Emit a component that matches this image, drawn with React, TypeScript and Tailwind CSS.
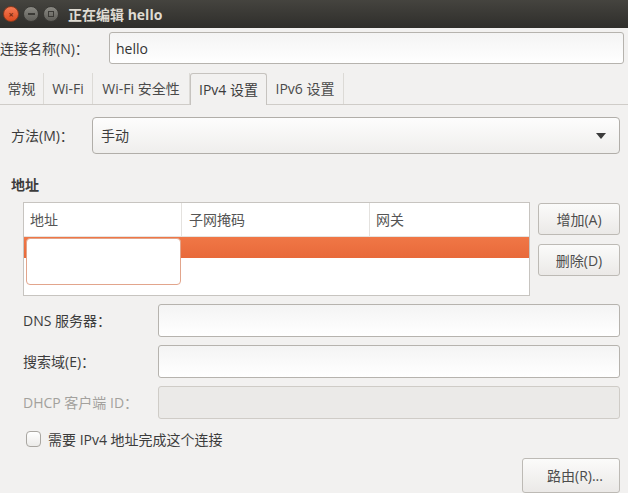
import React from 'react';

const font = { fontFamily: '"Open Sans", "Noto Sans CJK SC", sans-serif' };

function TitleBar() {
    return (
        <div className="h-[28px] flex items-center bg-gradient-to-b from-[#45443f] to-[#2f2e2b] shrink-0">
            <div className="ml-[3px] w-[16px] h-[16px] rounded-full bg-gradient-to-b from-[#f47a53] to-[#dd4a1d] flex items-center justify-center border border-[#8a3a1e]">
                <span className="text-[9px] leading-none text-[#7a2a10] font-bold">×</span>
            </div>
            <div className="ml-[4px] w-[16px] h-[16px] rounded-full bg-gradient-to-b from-[#8a8983] to-[#5f5e59] flex items-center justify-center border border-[#3a3935]">
                <div className="w-[7px] h-[2px] bg-[#3b3a36]" />
            </div>
            <div className="ml-[4px] w-[16px] h-[16px] rounded-full bg-gradient-to-b from-[#8a8983] to-[#5f5e59] flex items-center justify-center border border-[#3a3935]">
                <div className="w-[6px] h-[6px] border border-[#3b3a36]" />
            </div>
            <div className="ml-[9px] text-[14px] font-bold text-[#dfdbd2]">正在编辑 hello</div>
        </div>
    );
}

function Entry({ disabled, className = '' }: { disabled?: boolean; className?: string }) {
    return (
        <div
            className={`flex-1 rounded-[3px] border ${disabled ? 'border-[#cfccc7] bg-[#ebeae8]' : 'border-[#b6b3ae] bg-gradient-to-b from-[#f4f4f4] to-white'} ${className}`}
        />
    );
}

function Button({ label, className = '' }: { label: string; className?: string }) {
    return (
        <div
            className={`flex items-center justify-center rounded-[3px] border border-[#bdbab5] bg-gradient-to-b from-[#fbfbfa] to-[#ebe9e7] text-[14px] text-[#4c4c4c] ${className}`}
        >
            {label}
        </div>
    );
}

const tabs = ['常规', 'Wi-Fi', 'Wi-Fi 安全性', 'IPv4 设置', 'IPv6 设置'];
const tabWidths = ['w-[44px]', 'w-[49px]', 'w-[97px]', 'w-[77px]', 'w-[77px]'];

export default function App() {
    return (
        <div className="w-[628px] h-[493px] overflow-hidden bg-[#f2f1f0] text-[#3c3c3c] flex flex-col" style={font}>
            <TitleBar />

            {/* connection name */}
            <div className="mt-[4px] h-[32px] flex items-center">
                <div className="w-[109px] text-[14px]">连接名称(N)：</div>
                <div className="flex-1 mr-[4px] h-full rounded-[3px] border border-[#b6b3ae] bg-gradient-to-b from-[#f4f4f4] to-white flex items-center pl-[6px] text-[14px] text-[#333]">
                    hello
                </div>
            </div>

            {/* tabs */}
            <div className="mt-[9px] h-[32px] flex items-end border-b border-[#cfccc8]">
                {tabs.map((t, i) => {
                    const active = i === 3;
                    return (
                        <div
                            key={t}
                            className={`${tabWidths[i]} flex items-center justify-center text-[14px] ${active
                                ? 'h-[32px] -mb-px bg-[#f2f1f0] border border-b-0 border-[#c6c3bf] rounded-t-[3px] text-[#3c3c3c]'
                                : 'h-[31px] border-r border-[#dcdad6] text-[#4a4a4a]'
                                }`}
                        >
                            {t}
                        </div>
                    );
                })}
            </div>

            {/* method */}
            <div className="mt-[12px] flex items-center pl-[11px] pr-[8px]">
                <div className="w-[81px] text-[14px]">方法(M)：</div>
                <div className="flex-1 h-[37px] rounded-[4px] border border-[#b1aea9] bg-gradient-to-b from-[#fdfdfd] to-[#efeeec] flex items-center pl-[8px] pr-[13px] text-[14px]">
                    <span className="flex-1">手动</span>
                    <svg width="10" height="6" viewBox="0 0 10 6">
                        <path d="M0 0 L10 0 L5 6 Z" fill="#3c3c3c" />
                    </svg>
                </div>
            </div>

            <div className="mt-[22px] pl-[11px] text-[14px] font-bold text-[#3c3c3c] leading-[18px]">地址</div>

            {/* address table + buttons */}
            <div className="mt-[8px] flex pl-[23px] pr-[8px]">
                <div className="relative w-[507px] h-[94px] border border-[#c7c4c0] bg-white">
                    <div className="h-[34px] flex text-[14px] text-[#555] border-b border-[#e6e4e1]">
                        <div className="w-[158px] pl-[6px] flex items-center border-r border-[#e4e2df]">地址</div>
                        <div className="w-[188px] pl-[7px] flex items-center border-r border-[#e4e2df]">子网掩码</div>
                        <div className="flex-1 pl-[6px] flex items-center">网关</div>
                    </div>
                    <div className="h-[21px] bg-gradient-to-b from-[#f07746] to-[#e8693a]" />
                    <div className="absolute left-[2px] top-[35px] w-[155px] h-[47px] rounded-[4px] border border-[#e2a58c] bg-white" />
                </div>
                <div className="ml-[8px] flex-1 flex flex-col gap-[9px] pt-[1px]">
                    <Button label="增加(A)" className="h-[32px]" />
                    <Button label="删除(D)" className="h-[32px]" />
                </div>
            </div>

            {/* dns etc */}
            <div className="mt-[8px] flex flex-col gap-[8px] pl-[23px] pr-[8px]">
                <div className="h-[33px] flex items-center">
                    <div className="w-[135px] text-[14px]">DNS 服务器：</div>
                    <Entry className="h-full" />
                </div>
                <div className="h-[33px] flex items-center">
                    <div className="w-[135px] text-[14px]">搜索域(E)：</div>
                    <Entry className="h-full" />
                </div>
                <div className="h-[33px] flex items-center">
                    <div className="w-[135px] text-[14px] text-[#a3a19d]">DHCP 客户端 ID：</div>
                    <Entry disabled className="h-full" />
                </div>
            </div>

            <div className="mt-[11px] flex items-center pl-[26px] h-[18px]">
                <div className="w-[15px] h-[16px] rounded-[4px] border border-[#a9a6a1] bg-gradient-to-b from-white to-[#ecebe9]" />
                <div className="ml-[7px] text-[14px]">需要 IPv4 地址完成这个连接</div>
            </div>

            <div className="mt-[10px] flex justify-end pr-[8px]">
                <Button label="路由(R)..." className="w-[98px] h-[35px] pl-[8px]" />
            </div>
        </div>
    );
}
